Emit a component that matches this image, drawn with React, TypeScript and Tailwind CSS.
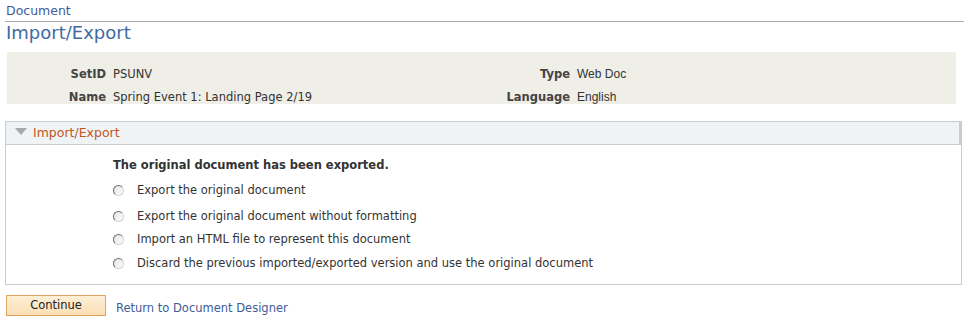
import React from "react";

const verdana = { fontFamily: '"DejaVu Sans", Verdana, sans-serif' };
const arial = { fontFamily: '"Liberation Sans", Arial, sans-serif' };

const options = [
  { label: "Export the original document", gap: "pt-0" },
  { label: "Export the original document without formatting", gap: "pt-[11px]" },
  { label: "Import an HTML file to represent this document", gap: "pt-[8px]" },
  { label: "Discard the previous imported/exported version and use the original document", gap: "pt-[9px]" },
];

function Radio() {
  return (
    <span className="inline-block h-[11px] w-[11px] shrink-0 rounded-full border border-t-[#6f6f6f] border-l-[#6f6f6f] border-r-[#d2d2d2] border-b-[#d2d2d2] bg-gradient-to-br from-[#e3e3e3] to-white" />
  );
}

export default function App() {
  return (
    <div className="min-h-[325px] w-[969px] bg-white text-[#333]" style={verdana}>
      <div className="px-[5px] pt-[3px]">
        <div className="border-b border-[#a9a9a9] pb-[3px] pl-[1px] text-[12.5px] leading-[15px] text-[#3d5c9a]">Document</div>
        <h1 className="pl-[1px] pt-0 text-[18px] leading-[22px] text-[#3f6aa0]">Import/Export</h1>
      </div>

      <div className="mx-[7px] mt-[8px] grid h-[52px] w-[949px] grid-cols-[99px_350px_100px_1fr] content-start gap-x-[7px] gap-y-[9px] bg-[#efeee7] pt-[15px] text-[11.5px] leading-[14px]">
        <span className="text-right font-bold text-[#444]">SetID</span>
        <span className="text-[#333]">PSUNV</span>
        <span className="text-right font-bold text-[#444]">Type</span>
        <span className="text-[12px] text-[#333]" style={arial}>Web Doc</span>
        <span className="text-right font-bold text-[#444]">Name</span>
        <span className="text-[#333]">Spring Event 1: Landing Page 2/19</span>
        <span className="text-right font-bold text-[#444]">Language</span>
        <span className="text-[12px] text-[#333]" style={arial}>English</span>
      </div>

      <section className="ml-[5px] mt-[17px] h-[164px] w-[957px] border border-[#c8ccd3]">
        <div className="flex h-[23px] items-center border-b border-r-2 border-[#c8ccd3] bg-[#eff3f5] pl-[9px] pt-[1px]">
          <svg width="12" height="7" viewBox="0 0 12 7" className="mb-[5px]">
            <path d="M0 0 H12 L6 7 Z" fill="#a8a8a8" />
          </svg>
          <span className="ml-[6px] text-[12.5px] text-[#c2561b]">Import/Export</span>
        </div>
        <div className="pl-[107px] pt-[12px] text-[11.5px]">
          <div className="font-bold leading-[16px] text-[#333]">The original document has been exported.</div>
          <div className="mt-[10px] flex flex-col">
            {options.map((o) => (
              <label key={o.label} className={`flex items-center gap-[13px] ${o.gap} leading-[15px] text-[#333]`}>
                <Radio />
                <span>{o.label}</span>
              </label>
            ))}
          </div>
        </div>
      </section>

      <div className="ml-[6px] mt-[9px] flex items-center gap-[10px]">
        <button className="h-[21px] w-[100px] border border-[#e0a25f] bg-gradient-to-b from-[#fdf0d8] to-[#fbdfb3] text-[11.5px] text-[#222]">
          Continue
        </button>
        <a className="pt-[6px] text-[11.5px] text-[#3d5c9a]">Return to Document Designer</a>
      </div>
    </div>
  );
}
